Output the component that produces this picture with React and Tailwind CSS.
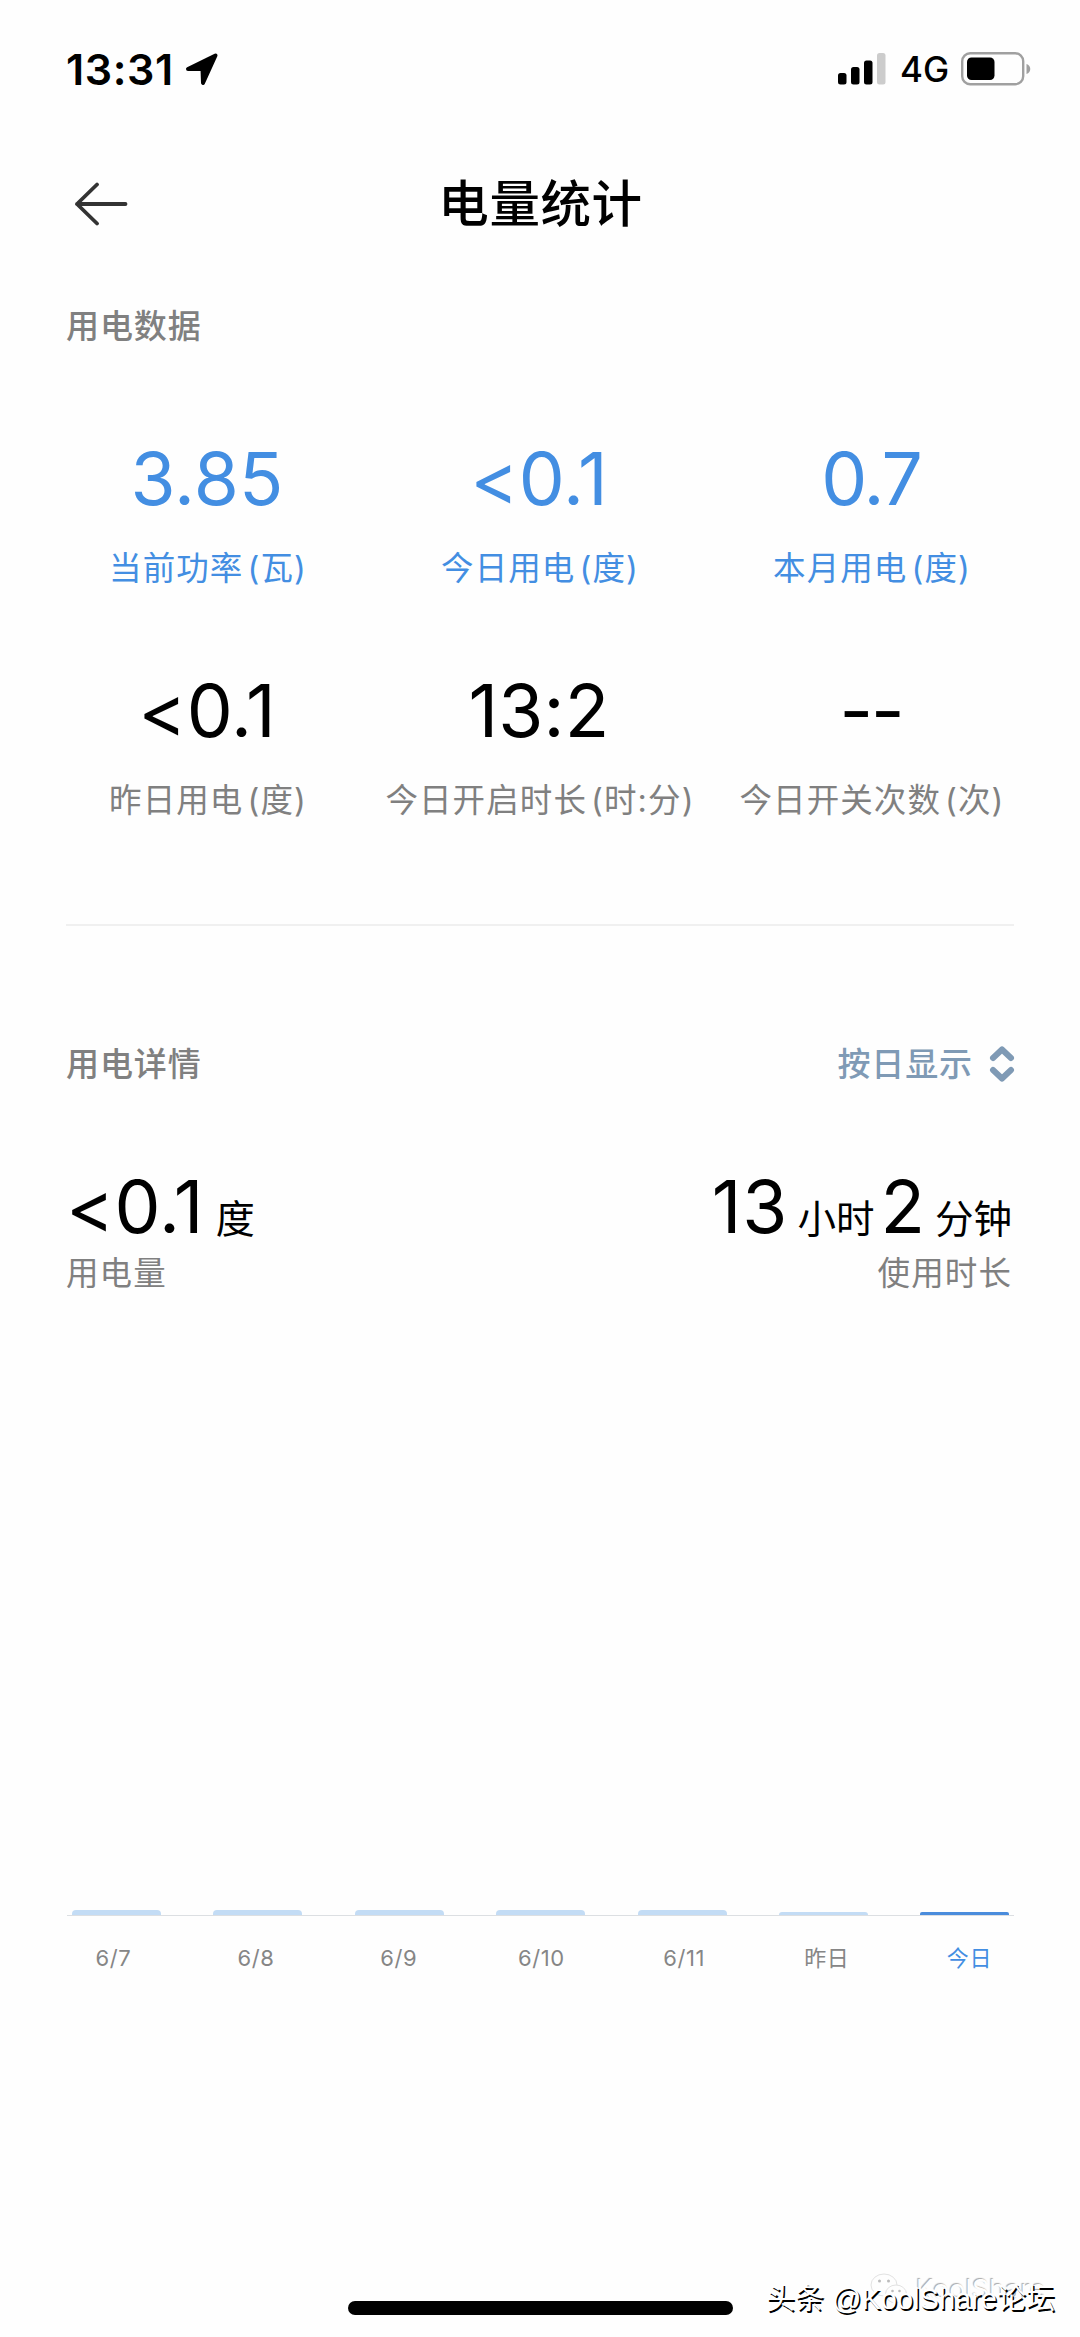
import React from 'react';

const stats = [
  { value: '3.85', name: '当前功率', unit: '(瓦)', active: true },
  { value: '<0.1', name: '今日用电', unit: '(度)', active: true },
  { value: '0.7', name: '本月用电', unit: '(度)', active: true, tight: true },
  { value: '<0.1', name: '昨日用电', unit: '(度)' },
  { value: '13:2', name: '今日开启时长', unit: '(时:分)' },
  { value: '--', name: '今日开关次数', unit: '(次)', tight: true },
];

const days = [
  { label: '6/7', height: 5 },
  { label: '6/8', height: 5 },
  { label: '6/9', height: 5 },
  { label: '6/10', height: 5 },
  { label: '6/11', height: 5 },
  { label: '昨日', height: 3 },
  { label: '今日', height: 3, today: true },
];

function StatusBar() {
  return (
    <header className="flex h-[138px] items-start justify-between pl-[66px] pr-[49px] pt-[42px]">
      <div className="flex h-[54px] items-center">
        <span className="w-[119px] text-[43px] font-semibold tracking-[0.6px]">13:31</span>
        <svg width="34" height="35" viewBox="0 0 34 35">
          <path d="M3 17 L30.5 3.5 L18 31 L17.5 17 Z" fill="#000" stroke="#000" strokeWidth="4" strokeLinejoin="round" />
        </svg>
      </div>
      <div className="flex h-[54px] items-center">
        <svg width="48" height="32" viewBox="0 0 48 32">
          <rect x="0" y="20" width="8.5" height="11.5" rx="2.5" />
          <rect x="13" y="14" width="8.5" height="17.5" rx="2.5" />
          <rect x="26" y="7.5" width="8.5" height="24" rx="2.5" />
          <rect x="39" y="0" width="8.5" height="31.5" rx="2.5" fill="#ccc" />
        </svg>
        <span className="ml-[14px] w-[61px] text-[35px] font-medium">4G</span>
        <svg width="70" height="34" viewBox="0 0 70 34">
          <rect x="1.2" y="1.2" width="61" height="31" rx="8" fill="none" stroke="#a0a0a0" strokeWidth="2.4" />
          <rect x="6" y="5.5" width="27.5" height="22.5" rx="4.5" />
          <path d="M65.5 12 C70.5 13.5 70.5 20.5 65.5 22 Z" fill="#a0a0a0" />
        </svg>
      </div>
    </header>
  );
}

function Stat({ value, name, unit, active, tight }) {
  return (
    <div className={active ? 'h-[232px] text-center text-[#438ee2]' : 'h-[232px] text-center text-black'}>
      <div className={tight ? 'h-[80px] pr-[2px] text-[73px] leading-[80px] tracking-[-2px]' : 'h-[80px] pr-[2px] text-[73px] leading-[80px] tracking-[0.2px]'}>
        {value}
      </div>
      <div className={active ? 'mt-[30px] h-[40px] text-[32.5px] leading-[40px] tracking-[1.1px]' : 'mt-[30px] h-[40px] text-[32.5px] leading-[40px] tracking-[1.1px] text-[#808080]'}>
        {name}
        <span className="ml-[4px]">{unit}</span>
      </div>
    </div>
  );
}

function Chart() {
  return (
    <section className="mt-[616px] pl-[67px] pr-[66px]">
      <div className="flex items-end gap-[52.4px] border-b border-[#dcdfe2] pl-[5px]">
        {days.map((d) => (
          <div
            key={d.label}
            className={d.today ? 'w-[89px] shrink-0 rounded-t-[2px] bg-[#4a8cdc]' : 'w-[89px] shrink-0 rounded-t-[4px] bg-[#c3dcf5]'}
            style={{ height: d.height }}
          />
        ))}
      </div>
      <div className="mt-[26px] -ml-[25px] flex">
        {days.map((d) => (
          <div
            key={d.label}
            className={
              d.today
                ? 'w-[142.7px] shrink-0 text-center text-[22px] leading-[32px] tracking-[0.6px] text-[#438ee2]'
                : 'w-[142.7px] shrink-0 text-center text-[22px] leading-[32px] tracking-[0.6px] text-[#868686]'
            }
          >
            {d.label}
          </div>
        ))}
      </div>
    </section>
  );
}

export default function App() {
  return (
    <div className="relative flex h-[2337px] w-[1080px] flex-col overflow-hidden bg-[#fefefe] font-['Inter','Noto_Sans_CJK_SC',sans-serif] text-black">
      <StatusBar />

      <nav className="flex h-[132px] items-center px-[74px]">
        <svg width="54" height="44" viewBox="0 0 54 44" fill="none" stroke="#333" strokeWidth="3.8" strokeLinecap="round" strokeLinejoin="round">
          <path d="M51.5 22 H3 M23 2.5 L3 22 L23 41.5" />
        </svg>
        <h1 className="flex-1 pr-[53px] text-center text-[50.5px] font-medium leading-[60px] tracking-[0.6px]">电量统计</h1>
      </nav>

      <h2 className="mt-[36px] h-[40px] pl-[66px] text-[33px] font-medium leading-[40px] tracking-[0.9px] text-[#808080]">用电数据</h2>

      <section className="mt-[93px] grid grid-cols-3 px-[42px]">
        {stats.map((s) => (
          <Stat key={s.name} {...s} />
        ))}
      </section>

      <div className="mx-[66px] mt-[21px] h-[2px] shrink-0 bg-[#f0f0f0]" />

      <div className="mt-[118px] flex h-[40px] items-center justify-between pl-[66px] pr-[65px] text-[33px] font-medium leading-[40px] tracking-[0.9px]">
        <h2 className="text-[#808080]">用电详情</h2>
        <button className="flex items-center gap-[16px] text-[#7f9ab5]">
          按日显示
          <svg width="26" height="38" viewBox="0 0 26 38" fill="none" stroke="#7f9ab5" strokeWidth="6" strokeLinecap="round" strokeLinejoin="round">
            <path d="M4 13 L13 4.5 L22 13 M4 25 L13 33.5 L22 25" />
          </svg>
        </button>
      </div>

      <section className="mt-[77px] flex justify-between pl-[66px] pr-[68px]">
        <div>
          <div className="flex h-[93px] items-baseline leading-[92px]">
            <span className="text-[73px] tracking-[0.2px]">&lt;0.1</span>
            <span className="ml-[12px] text-[39px]">度</span>
          </div>
          <div className="text-[32.5px] leading-[40px] tracking-[1.1px] text-[#808080]">用电量</div>
        </div>
        <div className="text-right">
          <div className="flex h-[93px] items-baseline leading-[92px]">
            <span className="text-[73px] tracking-[1px]">13</span>
            <span className="ml-[9px] text-[38.5px]">小时</span>
            <span className="ml-[6px] text-[73px]">2</span>
            <span className="ml-[10px] text-[38.5px]">分钟</span>
          </div>
          <div className="text-[32.5px] leading-[40px] tracking-[1.1px] text-[#808080]">使用时长</div>
        </div>
      </section>

      <Chart />

      {/* home indicator */}
      <div className="absolute bottom-[22px] left-[348px] h-[14px] w-[385px] rounded-full bg-black" />

      {/* watermarks */}
      <div className="absolute left-[869px] top-[2273px] flex items-center gap-[7px] text-[27px] leading-[34px] text-[#fefefe] [text-shadow:-1px_-1px_1px_#aaa]">
        <svg width="40" height="34" viewBox="0 0 40 34" fill="#fefefe" stroke="#e2e2e2" strokeWidth="1">
          <ellipse cx="15" cy="12" rx="13" ry="11" />
          <ellipse cx="27" cy="21" rx="10.5" ry="9" />
          <g fill="#bbb" stroke="none">
            <circle cx="10.5" cy="8" r="1.5" />
            <circle cx="19.5" cy="8" r="1.5" />
            <circle cx="23.5" cy="18" r="1.3" />
            <circle cx="30.5" cy="18" r="1.3" />
          </g>
        </svg>
        KoolShare
      </div>
      <div className="absolute left-[766px] top-[2280px] whitespace-nowrap font-['Liberation_Sans','Noto_Sans_CJK_SC',sans-serif] text-[29px] leading-[38px] text-white [text-shadow:1.5px_1.5px_0_#000]">
        头条 @KoolShare论坛
      </div>
    </div>
  );
}
